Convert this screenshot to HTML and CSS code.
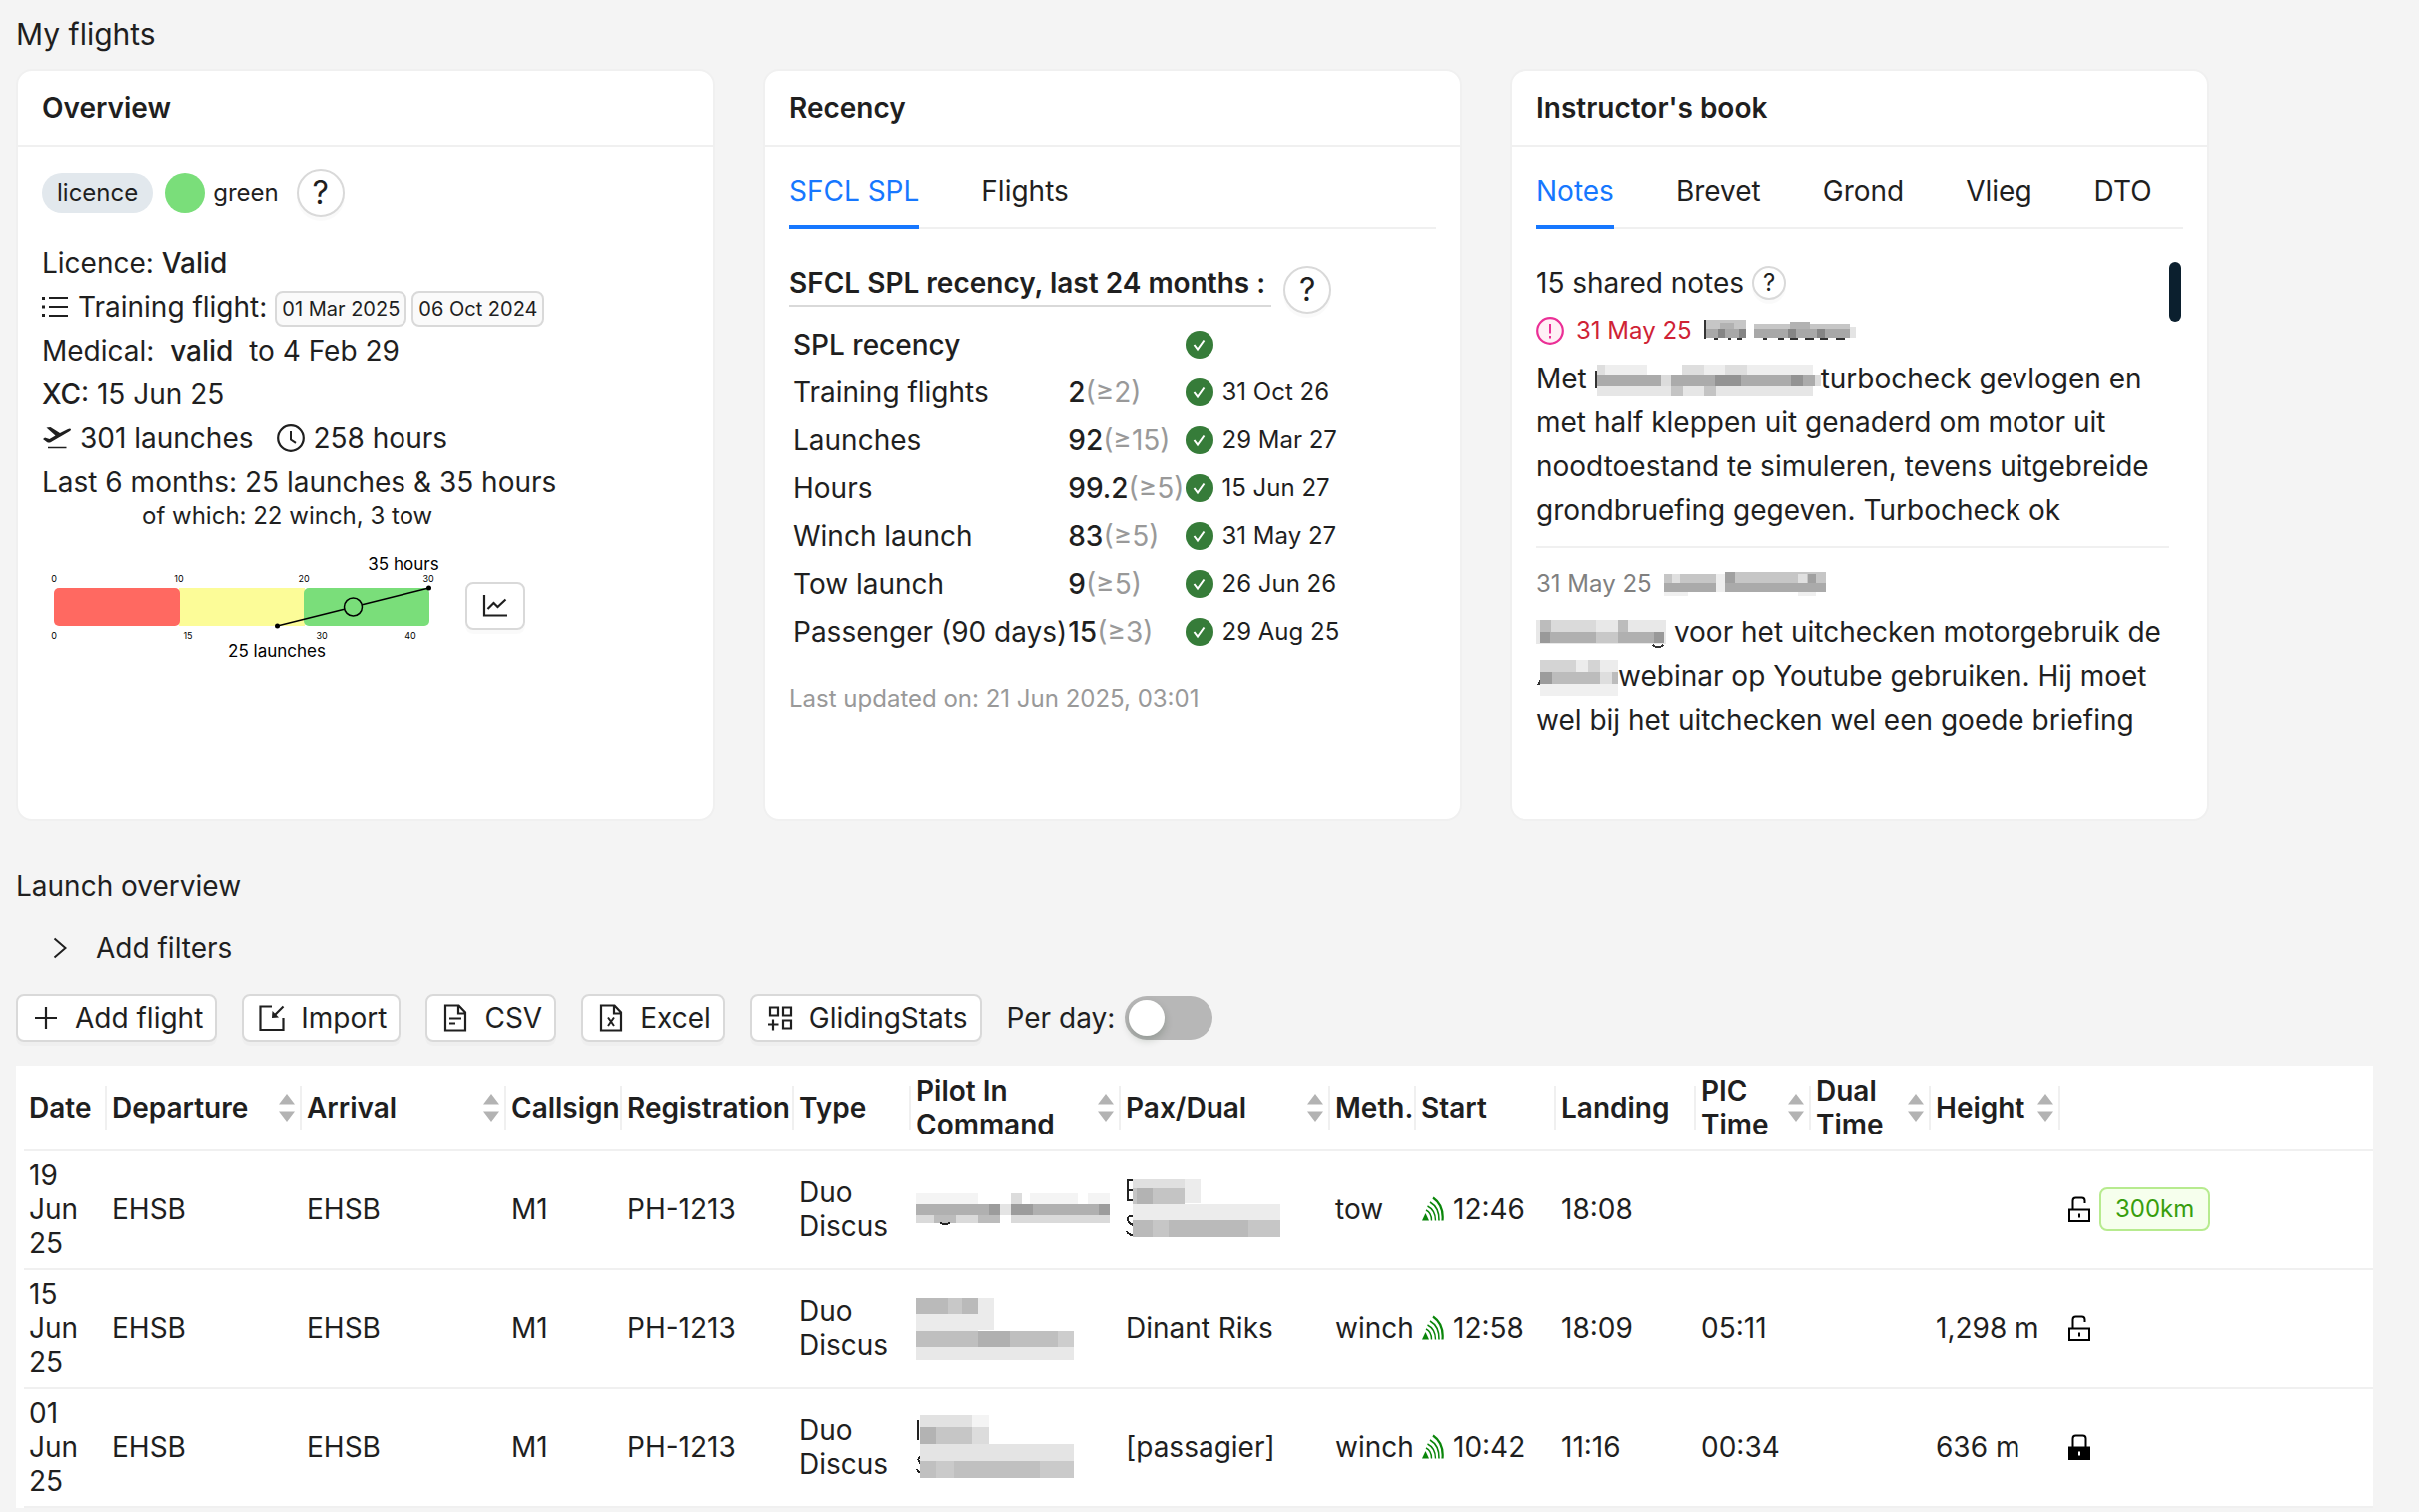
FILE: index.html
```html
<!DOCTYPE html>
<html lang="en">
<head>
<meta charset="utf-8">
<title>My flights</title>
<meta name="viewport" content="width=device-width, initial-scale=1">
<link rel="stylesheet" href="styles.css">
</head>
<body>
<svg class="defs" aria-hidden="true">
  <symbol id="check" viewBox="0 0 28 28"><circle cx="14" cy="14" r="14" fill="#367c39"/><path d="M8.500 14l3.500 4.500 6.500-9" fill="none" stroke="#fff" stroke-width="2"/></symbol>
  <symbol id="signal" viewBox="0 0 22 26"><path d="M0 24.500l3.500-7.500 3.500 7.500z" fill="#0a860a"/><g fill="none" stroke="#0a860a"><path d="M4 14q5.500 2.500 5.500 10.500" stroke-width="1.400"/><path d="M5.500 10q8 4 8 14.500" stroke-width="1.400"/><path d="M8 6q9.500 5.500 9 18.500" stroke-width="1.600"/><path d="M11 1.500q11 7.500 9.500 23" stroke-width="2.200"/></g></symbol>
  <symbol id="unlocked" viewBox="0 0 22 28"><path d="M1 14.500h20v11.500H1zM4.500 14V5.500q0-3 3-3h6q3 0 3 3V8" fill="none" stroke="#000" stroke-width="2"/><path d="M10 18.500h2v4h-2z"/></symbol>
  <symbol id="locked" viewBox="0 0 22 28"><path d="M0 13.500h22V27H0z"/><path d="M4.500 14V5.500q0-3 3-3h7q3 0 3 3V14" fill="none" stroke="#000" stroke-width="2"/><path d="M10 18.500h2v4h-2z" fill="#fff"/></symbol>
  <symbol id="sorter" viewBox="0 0 16 28"><path d="M8 0l8 10.500H0zM8 28l8-10.500H0z" fill="#b3b3b3"/></symbol>
</svg>

<main class="page">
  <h1 class="page-title">My flights</h1>

  <div class="cards">
    <section class="card">
      <h2 class="card-head">Overview</h2>
      <div class="card-body">
        <div class="status">
          <span class="pill">licence</span>
          <span class="lamp"></span>
          <span class="lamp-label">green</span>
          <button class="help" type="button">?</button>
        </div>
        <p class="line">Licence: <b class="medium">Valid</b></p>
        <p class="line training">
          <svg class="icon-list" viewBox="0 0 26 24"><path d="M7 3h19M7 12h19M7 21h19" stroke="#1f1f1f" stroke-width="2.200"/><path d="M0 2h3v3H0zM0 10.500h3v3H0zM0 19h3v3H0z" fill="#1f1f1f"/></svg>
          <span class="training-label">Training flight:</span>
          <span class="chip">01 Mar 2025</span>
          <span class="chip">06 Oct 2024</span>
        </p>
        <p class="line">Medical:&nbsp; <b class="medium">valid</b>&nbsp; to 4 Feb 29</p>
        <p class="line"><b class="medium">XC</b>: 15 Jun 25</p>
        <p class="line totals">
          <svg class="icon-plane" viewBox="0 0 30 24"><path d="M1 13l2-1.500L7.500 13l6-3.500L4.500 1.500l4-.5 9.500 6 8-4q2.500-1 3 .2.300 1-1.500 2L9 16q-2 1-4 0z" fill="#1f1f1f"/><path d="M6 21.500h18.500" stroke="#1f1f1f" stroke-width="1.500"/></svg>
          <span>301 launches</span>
          <svg class="icon-clock" viewBox="0 0 28 28"><circle cx="14" cy="14" r="12.800" fill="none" stroke="#1f1f1f" stroke-width="2.200"/><path d="M14 7v8.500l5 3.300" fill="none" stroke="#1f1f1f" stroke-width="2"/></svg>
          <span>258 hours</span>
        </p>
        <p class="line">Last 6 months: 25 launches &amp; 35 hours</p>
        <p class="subline">of which: 22 winch, 3 tow</p>
        <div class="barometer">
          <svg class="barometer-chart" viewBox="0 0 400 108">
            <path d="M137 36h126v38H137z" fill="#fcfc98"/>
            <rect x="12" y="36" width="126" height="38" rx="5" fill="#ff6961"/>
            <rect x="262" y="36" width="126" height="38" rx="5" fill="#7ade7a"/>
            <path d="M235.500 74L387.500 36" stroke="#000" stroke-width="1.500"/>
            <circle cx="311.500" cy="55" r="9" fill="#7ade7a" stroke="#000" stroke-width="1.500"/>
            <circle cx="235.500" cy="74" r="2.500"/><circle cx="387.500" cy="36" r="2.500"/>
            <g class="tick"><text x="12" y="30">0</text><text x="137" y="30">10</text><text x="262" y="30">20</text><text x="387" y="30">30</text><text x="12" y="87">0</text><text x="146" y="87">15</text><text x="280" y="87">30</text><text x="369" y="87">40</text></g>
            <g class="mark"><text x="362" y="18">35 hours</text><text x="235" y="105">25 launches</text></g>
          </svg>
          <button class="chart-btn" type="button" aria-label="Chart"><svg viewBox="0 0 26 24"><path d="M2 1v20.500h23" fill="none" stroke="#1f1f1f" stroke-width="2.200"/><path d="M5.500 15l6-6 4 4 8-7.500" fill="none" stroke="#1f1f1f" stroke-width="2.200"/></svg></button>
        </div>
      </div>
    </section>

    <section class="card">
      <h2 class="card-head">Recency</h2>
      <div class="card-body">
        <div class="tabs" role="tablist">
          <button class="tab tab-on" role="tab" type="button" aria-selected="true">SFCL SPL</button>
          <button class="tab" role="tab" type="button">Flights</button>
        </div>
        <div class="recency-head">
          <h3 class="recency-title">SFCL SPL recency, last 24 months :</h3>
          <button class="help" type="button">?</button>
        </div>
        <table class="recency">
          <tr><td class="medium">SPL recency</td><td></td><td><svg class="check"><use href="#check"/></svg></td><td></td></tr>
          <tr><td>Training flights</td><td><span class="medium">2</span><span class="need">(≥2)</span></td><td><svg class="check"><use href="#check"/></svg></td><td class="until">31 Oct 26</td></tr>
          <tr><td>Launches</td><td><span class="medium">92</span><span class="need">(≥15)</span></td><td><svg class="check"><use href="#check"/></svg></td><td class="until">29 Mar 27</td></tr>
          <tr><td>Hours</td><td><span class="medium">99.2</span><span class="need">(≥5)</span></td><td><svg class="check"><use href="#check"/></svg></td><td class="until">15 Jun 27</td></tr>
          <tr><td>Winch launch</td><td><span class="medium">83</span><span class="need">(≥5)</span></td><td><svg class="check"><use href="#check"/></svg></td><td class="until">31 May 27</td></tr>
          <tr><td>Tow launch</td><td><span class="medium">9</span><span class="need">(≥5)</span></td><td><svg class="check"><use href="#check"/></svg></td><td class="until">26 Jun 26</td></tr>
          <tr><td>Passenger (90 days)</td><td><span class="medium">15</span><span class="need">(≥3)</span></td><td><svg class="check"><use href="#check"/></svg></td><td class="until">29 Aug 25</td></tr>
        </table>
        <p class="updated">Last updated on: 21 Jun 2025, 03:01</p>
      </div>
    </section>

    <section class="card">
      <h2 class="card-head">Instructor's book</h2>
      <div class="card-body">
        <div class="tabs" role="tablist">
          <button class="tab tab-on" role="tab" type="button" aria-selected="true">Notes</button>
          <button class="tab" role="tab" type="button">Brevet</button>
          <button class="tab" role="tab" type="button">Grond</button>
          <button class="tab" role="tab" type="button">Vlieg</button>
          <button class="tab" role="tab" type="button">DTO</button>
        </div>
        <div class="notes-pane">
          <div class="notes">
            <div class="notes-count"><span>15 shared notes</span><button class="help help-small" type="button">?</button></div>
            <article class="note">
              <div class="note-head note-alert">
                <svg class="icon-alert" viewBox="0 0 28 28"><circle cx="14" cy="14" r="12.800" fill="#fff0f6" stroke="#eb2f96" stroke-width="2.200"/><path d="M14 7v9.500M14 19v2.500" stroke="#eb2f96" stroke-width="2"/></svg>
                <span>31 May 25</span>
                <svg class="mosaic" width="156" height="22" viewBox="0 0 156 22"><path d="M1 0v19M10 19h4M24 19h3M33 19h5M59 19h4M74 19h6M86 19h8M101 19h9M116 19h8M132 19h9" stroke="#333" stroke-width="2"/><path d="M2 0h40v9H2zM50 4h96v6H50z" fill="#c6c6c6"/><path d="M86 2h20v8H86zM16 3h14v6H16z" fill="#b2b2b2"/><path d="M2 9h40v9H2zM50 9h96v9H50z" fill="#a8a8a8"/><path d="M35 9h7v9h-7zM14 9h7v9h-7zM84 9h8v9h-8zM113 9h8v9h-8z" fill="#858585"/><path d="M146 7h6v11h-6z" fill="#e4e4e4"/></svg>
              </div>
              <p class="note-text">Met <svg class="mosaic" width="226" height="32" viewBox="0 0 226 32"><path d="M1 6v18" stroke="#333" stroke-width="2"/><path d="M2 0h8v11H2zM87 0h22v11H87zM130 0h22v11h-22z" fill="#dedede"/><path d="M10 0h42v11H10zM109 0h21v11h-21zM152 0h66v11h-66z" fill="#eee"/><path d="M2 10h64v12H2zM76 10h144v12H76z" fill="#ababab"/><path d="M120 10h26v12h-26zM196 10h12v12h-12z" fill="#939393"/><path d="M66 10h10v12H66zM220 10h6v12h-6z" fill="#dcdcdc"/><path d="M2 22h216v10H2z" fill="#e6e6e6"/><path d="M76 22h12v10H76zM109 22h12v10h-12z" fill="#c4c4c4"/></svg><span>turbocheck gevlogen en</span> met half kleppen uit genaderd om motor uit noodtoestand te simuleren, tevens uitgebreide grondbruefing gegeven. Turbocheck ok</p>
            </article>
            <article class="note">
              <div class="note-head">
                <span>31 May 25</span>
                <svg class="mosaic" width="162" height="24" viewBox="0 0 162 24"><path d="M0 2h52v9H0zM61 0h101v11H61z" fill="#c6c6c6"/><path d="M61 0h10v11H61zM8 2h8v9H8zM144 2h8v9h-8z" fill="#a0a0a0"/><path d="M8 2h8v9H8zM134 2h9v9h-9z" fill="#e0e0e0"/><path d="M0 11h52v9H0zM61 11h101v9H61z" fill="#aaa"/><path d="M52 2h9v18h-9z" fill="#eee"/><path d="M0 20h24v4H0zM134 20h18v4h-18z" fill="#f0f0f0"/></svg>
              </div>
              <p class="note-text"><svg class="mosaic" width="130" height="32" viewBox="0 0 130 32"><path d="M0 2h130v24H0z" fill="#e8e8e8"/><path d="M4 2h11v12H4zM82 2h10v12H82z" fill="#bcbcbc"/><path d="M15 2h45v12H15z" fill="#dadada"/><path d="M4 14h124v11H4z" fill="#b0b0b0"/><path d="M60 14h22v11H60z" fill="#c8c8c8"/><path d="M118 14h10v11h-10zM4 14h10v11H4z" fill="#999"/><path d="M117 27q5 5 10 0" fill="none" stroke="#333" stroke-width="2"/></svg> voor het uitchecken motorgebruik de <svg class="mosaic" width="82" height="36" viewBox="0 0 82 36"><path d="M1 25l3-6v6z" fill="#333"/><path d="M4 0h36v12H4zM52 0h12v12H52z" fill="#d4d4d4"/><path d="M40 0h12v12H40zM64 0h18v12H64z" fill="#ececec"/><path d="M4 12h78v12H4z" fill="#bcbcbc"/><path d="M4 12h12v12H4z" fill="#9c9c9c"/><path d="M64 12h12v12H64z" fill="#dedede"/><path d="M4 24h78v12H4z" fill="#f0f0f0"/></svg>webinar op Youtube gebruiken. Hij moet wel bij het uitchecken wel een goede briefing</p>
            </article>
          </div>
          <div class="scroll-thumb"></div>
        </div>
      </div>
    </section>
  </div>

  <h2 class="section-title">Launch overview</h2>
  <button class="filters" type="button"><svg viewBox="0 0 14 22"><path d="M1.500 1.500L12.500 11l-11 9.500" fill="none" stroke="#1f1f1f" stroke-width="2"/></svg>Add filters</button>

  <div class="toolbar">
    <button class="btn" type="button"><svg viewBox="0 0 28 28"><path d="M14 3v22M3 14h22" stroke="#1f1f1f" stroke-width="2.200"/></svg>Add flight</button>
    <button class="btn" type="button"><svg viewBox="0 0 28 28"><path d="M14 2.500H2.500v23.500h23V14" fill="none" stroke="#1f1f1f" stroke-width="2.200"/><path d="M25.500 2.500L17 11" stroke="#1f1f1f" stroke-width="2.200"/><path d="M14 14l.5-7 6.500 6.500z" fill="#1f1f1f"/></svg>Import</button>
    <button class="btn" type="button"><svg viewBox="0 0 28 28"><path d="M4 1.500h13.500l6.500 7v18H4zM17 2v7.500h7" fill="none" stroke="#1f1f1f" stroke-width="2.200"/><path d="M8 14.500h12M8 19.500h6" stroke="#1f1f1f" stroke-width="2"/></svg>CSV</button>
    <button class="btn" type="button"><svg viewBox="0 0 28 28"><path d="M4 1.500h13.500l6.500 7v18H4zM17 2v7.500h7" fill="none" stroke="#1f1f1f" stroke-width="2.200"/><path d="M11 13.500l6 8.500M17 13.500l-6 8.500" stroke="#1f1f1f" stroke-width="2"/></svg>Excel</button>
    <button class="btn" type="button"><svg viewBox="0 0 28 28"><path d="M4 3.500h8v8H4zM17 3.500h8v8h-8zM17 16.500h8v8h-8zM7 15.500v11M2 20.500h10.500" fill="none" stroke="#1f1f1f" stroke-width="2.200"/></svg>GlidingStats</button>
    <div class="per-day">
      <label for="per-day">Per day:</label>
      <input class="switch" id="per-day" type="checkbox" role="switch">
    </div>
  </div>

  <div class="table-wrap">
    <table class="flights">
      <colgroup><col class="w-date"><col class="w-departure"><col class="w-arrival"><col class="w-callsign"><col class="w-registration"><col class="w-type"><col class="w-person"><col class="w-person"><col class="w-method"><col class="w-clock"><col class="w-clock"><col class="w-pic"><col class="w-dual"><col class="w-height"><col></colgroup>
      <thead>
        <tr>
          <th>Date</th>
          <th><div class="sortable">Departure<svg><use href="#sorter"/></svg></div></th>
          <th><div class="sortable">Arrival<svg><use href="#sorter"/></svg></div></th>
          <th>Callsign</th><th>Registration</th><th>Type</th>
          <th><div class="sortable">Pilot In Command<svg><use href="#sorter"/></svg></div></th>
          <th><div class="sortable">Pax/Dual<svg><use href="#sorter"/></svg></div></th>
          <th>Meth.</th><th>Start</th><th>Landing</th>
          <th><div class="sortable">PIC Time<svg><use href="#sorter"/></svg></div></th>
          <th><div class="sortable">Dual Time<svg><use href="#sorter"/></svg></div></th>
          <th><div class="sortable">Height<svg><use href="#sorter"/></svg></div></th>
          <th class="plain"></th>
        </tr>
      </thead>
      <tbody>
        <tr>
          <td>19 Jun 25</td><td>EHSB</td><td>EHSB</td><td>M1</td><td>PH-1213</td><td>Duo Discus</td>
          <td><svg class="mosaic" width="200" height="32" viewBox="0 0 200 32"><path d="M0 0h62v11H0zM114 0h48v11h-48zM172 0h22v11h-22z" fill="#f4f4f4"/><path d="M95 0h11v11H95z" fill="#dcdcdc"/><path d="M0 11h84v11H0zM95 11h99v11H95z" fill="#b0b0b0"/><path d="M73 11h11v11H73zM95 11h22v11H95zM183 11h11v11h-11z" fill="#9c9c9c"/><path d="M84 11h11v11H84z" fill="#e4e4e4"/><path d="M0 22h18v8H0zM40 22h22v8H40zM95 22h99v8H95z" fill="#dadada"/><path d="M18 22h22v8H18zM62 22h22v8H62z" fill="#bcbcbc"/><path d="M24 30q5 2 10 0" fill="none" stroke="#222" stroke-width="2"/></svg></td>
          <td><svg class="mosaic" width="156" height="60" viewBox="0 0 156 60"><path d="M7 1H2v20h5M2 11h5M7 37q-6-1-5 4 1 3 5 5M1 52q2 4 6 4" fill="none" stroke="#222" stroke-width="2"/><path d="M7 0h52v9H7z" fill="#e0e0e0"/><path d="M59 0h16v24H59z" fill="#ececec"/><path d="M7 9h52v16H7z" fill="#c4c4c4"/><path d="M11 9h16v16H11z" fill="#b3b3b3"/><path d="M7 25h148v16H7z" fill="#ececec"/><path d="M7 41h148v17H7z" fill="#bababa"/><path d="M27 41h16v17H27zM123 41h32v17h-32z" fill="#c6c6c6"/></svg></td>
          <td>tow</td><td><span class="with-icon"><svg class="signal"><use href="#signal"/></svg>12:46</span></td><td>18:08</td><td></td><td></td><td></td>
          <td><span class="actions"><svg class="lock"><use href="#unlocked"/></svg><span class="tag">300km</span></span></td>
        </tr>
        <tr>
          <td>15 Jun 25</td><td>EHSB</td><td>EHSB</td><td>M1</td><td>PH-1213</td><td>Duo Discus</td>
          <td><svg class="mosaic" width="158" height="64" viewBox="0 0 158 64"><path d="M0 2h62v16H0z" fill="#bababa"/><path d="M32 2h14v16H32z" fill="#c8c8c8"/><path d="M62 2h16v32H62zM0 18h62v17H0z" fill="#ebebeb"/><path d="M0 35h158v16H0z" fill="#bfbfbf"/><path d="M62 35h32v16H62z" fill="#b0b0b0"/><path d="M142 35h16v16h-16z" fill="#cdcdcd"/><path d="M0 51h158v13H0z" fill="#e8e8e8"/></svg></td>
          <td>Dinant Riks</td><td>winch</td><td><span class="with-icon"><svg class="signal"><use href="#signal"/></svg>12:58</span></td><td>18:09</td><td>05:11</td><td></td><td>1,298 m</td>
          <td><span class="actions"><svg class="lock"><use href="#unlocked"/></svg></span></td>
        </tr>
        <tr>
          <td>01 Jun 25</td><td>EHSB</td><td>EHSB</td><td>M1</td><td>PH-1213</td><td>Duo Discus</td>
          <td><svg class="mosaic" width="158" height="64" viewBox="0 0 158 64"><path d="M2 5v20M5 41q-5 3 0 8M1 54q1 3 4 4" fill="none" stroke="#222" stroke-width="2"/><path d="M4 0h52v12H4z" fill="#e2e2e2"/><path d="M4 12h52v17H4z" fill="#c6c6c6"/><path d="M4 12h16v17H4z" fill="#b3b3b3"/><path d="M56 12h17v17H56z" fill="#dcdcdc"/><path d="M56 0h17v12H56z" fill="#f4f4f4"/><path d="M4 29h154v17H4z" fill="#e4e4e4"/><path d="M4 46h154v17H4z" fill="#c0c0c0"/><path d="M20 46h18v17H20zM124 46h34v17h-34z" fill="#cacaca"/></svg></td>
          <td>[passagier]</td><td>winch</td><td><span class="with-icon"><svg class="signal"><use href="#signal"/></svg>10:42</span></td><td>11:16</td><td>00:34</td><td></td><td>636 m</td>
          <td><span class="actions"><svg class="lock"><use href="#locked"/></svg></span></td>
        </tr>
      </tbody>
    </table>
  </div>
</main>
</body>
</html>
```
FILE: styles.css
```css
* { box-sizing: border-box; }
body {
  margin: 0;
  background: #f4f4f4;
  color: #1f1f1f;
  font: 400 28px/44px Inter, "Liberation Sans", sans-serif;
}
h1, h2, h3, p { margin: 0; font-size: 28px; font-weight: 400; }
button { margin: 0; padding: 0; border: 0; background: none; color: inherit; font: inherit; }
svg { flex: none; }
table { border-collapse: collapse; }
.defs { display: none; }
.medium { font-weight: 500; }

.page { padding: 12px 46px 0 16px; }
.page-title { font-size: 30px; }

/* cards */
.cards {
  display: grid;
  grid-template-columns: repeat(3, minmax(0, 700px));
  gap: 48px;
  margin-top: 13px;
}
.card { background: #fff; border: 2px solid #f0f0f0; border-radius: 16px; }
.card-head { padding: 15px 24px; border-bottom: 2px solid #f0f0f0; font-weight: 600; }
.card-body { padding: 22px 24px; }

.help {
  width: 48px;
  height: 48px;
  border: 2px solid #d9d9d9;
  border-radius: 50%;
  background: #fff;
  box-shadow: 0 4px 0 rgba(0, 0, 0, .02);
  font-size: 32px;
  line-height: 44px;
  text-align: center;
}
.help-small { width: 34px; height: 34px; font-size: 24px; line-height: 30px; }

.status { display: flex; align-items: center; height: 48px; margin-bottom: 24px; font-size: 24px; }
.pill { padding: 0 15px; border-radius: 20px; background: #e2e8ed; line-height: 40px; }
.lamp { width: 40px; height: 40px; margin: 0 8px 0 12px; border-radius: 50%; background: #7ade7a; }
.lamp-label { margin-right: 18px; }

.training, .totals { display: flex; align-items: center; }
.icon-list { width: 26px; height: 24px; margin-right: 10px; }
.training-label { margin-right: 8px; }
.chip {
  margin: 4px 5px 0 0;
  padding: 0 5px;
  border: 2px solid #d9d9d9;
  border-radius: 8px;
  background: #fafafa;
  font-size: 20px;
  line-height: 32px;
}
.icon-plane { width: 30px; height: 24px; margin-right: 8px; }
.icon-clock { width: 28px; height: 28px; margin: 0 8px 0 24px; }
.subline { padding-left: 100px; font-size: 24px; line-height: 24px; }

.barometer { display: flex; align-items: center; gap: 24px; margin-top: 24px; }
.barometer-chart { width: 400px; height: 108px; }
.barometer-chart text { text-anchor: middle; }
.tick { font-size: 9px; }
.mark { font-size: 17px; }
.chart-btn {
  display: grid;
  place-items: center;
  width: 60px;
  height: 48px;
  border: 2px solid #d9d9d9;
  border-radius: 8px;
  box-shadow: 0 4px 0 rgba(0, 0, 0, .02);
}
.chart-btn svg { width: 26px; height: 24px; }

/* tabs */
.tabs { display: flex; gap: 62px; margin-bottom: 32px; box-shadow: inset 0 -2px #f0f0f0; }
.tab { padding-bottom: 12px; border-bottom: 4px solid transparent; }
.tab-on { border-color: #1677ff; color: #1677ff; }

/* recency */
.recency-head { display: flex; align-items: flex-end; gap: 12px; height: 53px; margin-bottom: 7px; }
.recency-title { align-self: flex-start; padding-right: 6px; border-bottom: 2px solid #d9d9d9; font-weight: 600; }
.recency td { height: 48px; padding: 0 1px 0 4px; white-space: nowrap; }
.recency td + td { padding-left: 0; }
.need { color: #999; }
.check { display: block; width: 28px; height: 28px; margin-right: 8px; }
.until { font-size: 24px; }
.updated { margin-top: 21px; color: #999; font-size: 24px; }

/* instructor's book */
.notes-pane { display: flex; align-items: flex-start; min-height: 537px; overflow: hidden; }
.notes { flex: 1; min-width: 0; }
.notes-count { display: flex; align-items: center; gap: 8px; }
.note { padding: 4px 0 14px; }
.note + .note { padding-top: 14px; border-top: 2px solid #f0f0f0; }
.note-head { display: flex; align-items: center; gap: 12px; height: 44px; margin-bottom: 4px; color: #808080; font-size: 24px; }
.note-alert { color: #cf2235; }
.icon-alert { width: 28px; height: 28px; }
.scroll-thumb { width: 12px; height: 60px; margin: 1px 2px 0 0; border-radius: 6px; background: #0b1f2e; }
.note-text .mosaic { vertical-align: middle; margin: -4px 0; }
.mosaic { shape-rendering: crispEdges; }

/* launch overview */
.section-title { margin-top: 43px; font-weight: 400; }
.filters { display: flex; align-items: center; gap: 29px; margin: 18px 0 24px; padding-left: 37px; }
.filters svg { width: 14px; height: 22px; }
.toolbar { display: flex; align-items: center; gap: 25px; margin-bottom: 24px; }
.btn {
  display: flex;
  align-items: center;
  gap: 15px;
  height: 48px;
  padding: 0 12px 0 14px;
  border: 2px solid #d9d9d9;
  border-radius: 8px;
  background: #fff;
  box-shadow: 0 4px 0 rgba(0, 0, 0, .02);
}
.btn svg { width: 28px; height: 28px; }
.per-day { display: flex; align-items: center; gap: 10px; }
.switch {
  appearance: none;
  display: flex;
  align-items: center;
  width: 88px;
  height: 44px;
  margin: 0;
  padding: 4px;
  border-radius: 22px;
  background: #b7b7b7;
}
.switch::before {
  content: "";
  width: 36px;
  height: 36px;
  border-radius: 50%;
  background: #fff;
  box-shadow: 0 4px 8px rgba(0, 35, 11, .2);
}

/* flights table */
.table-wrap { padding-left: 8px; background: #fff; }
.flights { width: 100%; table-layout: fixed; line-height: 34px; }
.flights th, .flights td { padding: 7px 5px 8px; border-bottom: 2px solid #f0f0f0; text-align: left; vertical-align: middle; }
.flights th {
  height: 85px;
  background: linear-gradient(#f0f0f0, #f0f0f0) right center / 2px 44px no-repeat;
  font-weight: 600;
}
.flights th.plain { background: none; }
.flights td { height: 119px; }
.sortable { display: flex; align-items: center; justify-content: space-between; padding-right: 2px; }
.sortable svg { width: 16px; height: 28px; }
.flights .mosaic { display: block; }
.with-icon, .actions { display: flex; align-items: center; gap: 8px; }
.actions { padding-left: 2px; }
.signal { width: 24px; height: 26px; }
.lock { width: 24px; height: 28px; }
.tag { padding: 0 14px; border: 2px solid #b7eb8f; border-radius: 8px; background: #f6ffed; color: #389e0d; font-size: 24px; line-height: 40px; }

.w-date { width: 83px; }
.w-departure { width: 195px; }
.w-arrival { width: 205px; }
.w-callsign { width: 116px; }
.w-registration { width: 172px; }
.w-type { width: 117px; }
.w-person { width: 210px; }
.w-method { width: 86px; }
.w-clock { width: 140px; }
.w-pic { width: 115px; }
.w-dual { width: 120px; }
.w-height { width: 130px; }
```
